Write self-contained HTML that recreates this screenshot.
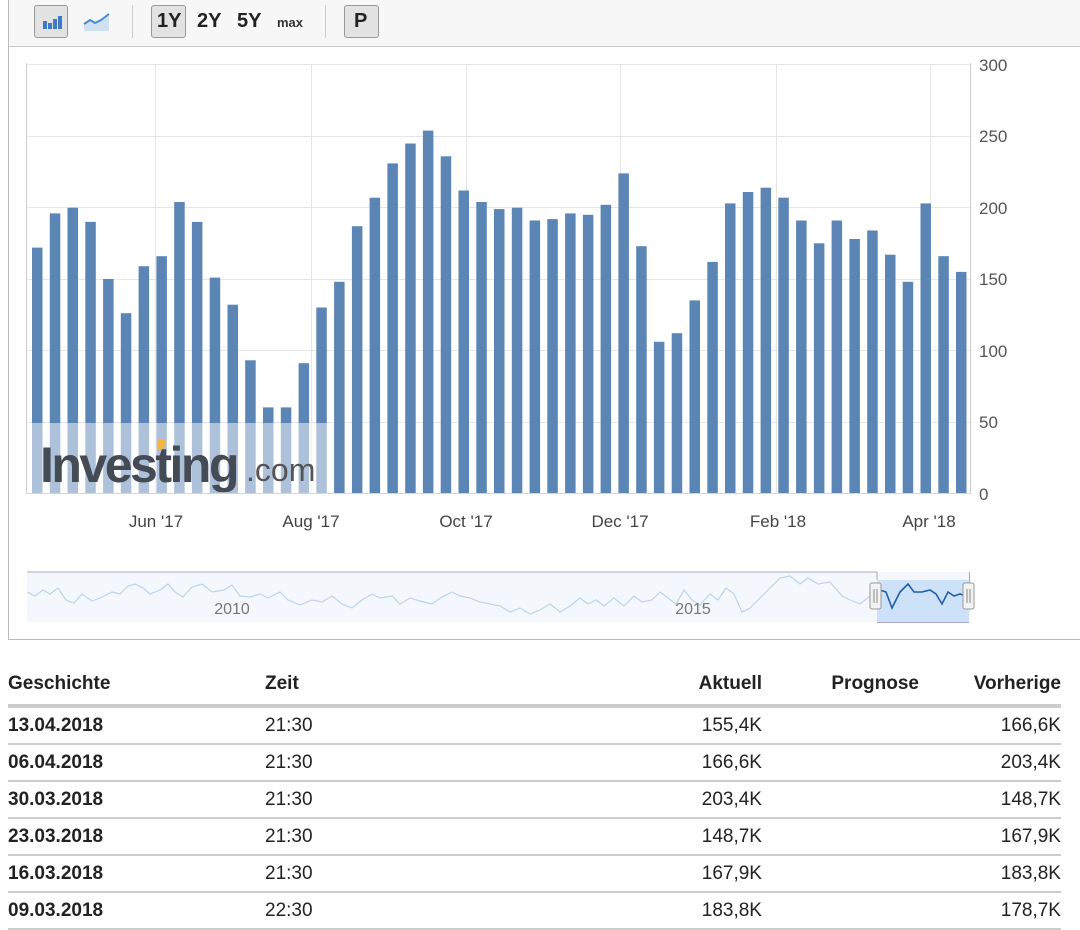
<!DOCTYPE html>
<html><head><meta charset="utf-8">
<style>
body{margin:0;width:1080px;height:927px;background:#fff;font-family:"Liberation Sans",sans-serif;overflow:hidden;position:relative}
.frame{position:absolute;left:8px;top:-2px;width:1080px;height:642px;border:1px solid #bbb;box-sizing:border-box}
.tb{position:absolute;left:9px;top:0;width:1071px;height:46px;background:#f7f7f7;border-bottom:1px solid #ccc}
.btn{position:absolute;top:5px;height:33px;border:1px solid #999;border-radius:3px;background:#e2e2e2;box-sizing:border-box}
.t{position:absolute;font-size:20px;color:#222;top:10px;font-weight:bold}
.sep{position:absolute;top:5px;width:1px;height:33px;background:#ccc}
table{position:absolute;left:8px;top:664px;width:1053px;border-collapse:collapse;font-size:19px;color:#222}
th{font-weight:bold;height:40px;text-align:left;border-bottom:4px solid #ccc;padding:0}
td{height:35px;border-bottom:2px solid #ccc;padding:0}
.r{text-align:right}
</style></head><body>
<div class="frame"></div>
<div class="tb">
 <div class="btn" style="left:25px;width:34px"></div>
 <svg style="position:absolute;left:32px;top:13px" width="22" height="18"><rect x="2" y="8" width="4" height="8" fill="#3d7cc4"/><rect x="7" y="10" width="4" height="6" fill="#3d7cc4"/><rect x="12" y="6" width="4" height="10" fill="#3d7cc4"/><rect x="17" y="3" width="4" height="13" fill="#3d7cc4"/></svg>
 <svg style="position:absolute;left:74px;top:12px" width="28" height="22"><path d="M1 19 L1 12 L7 8 L12 11 L18 8 L26 2 L26 19Z" fill="#cfe0f3"/><path d="M1 12 L7 8 L12 11 L18 8 L26 2" stroke="#4a8bd0" stroke-width="2" fill="none"/></svg>
 <div class="sep" style="left:123px"></div>
 <div class="btn" style="left:142px;width:35px"></div>
 <div class="t" style="left:148px">1Y</div>
 <div class="t" style="left:188px">2Y</div>
 <div class="t" style="left:228px">5Y</div>
 <div class="t" style="left:268px;font-size:13px;top:15px;color:#333">max</div>
 <div class="sep" style="left:316px"></div>
 <div class="btn" style="left:335px;width:35px"></div>
 <div class="t" style="left:345px">P</div>
</div>
<svg id="ch" style="position:absolute;left:0;top:0" width="1080" height="640">
 <g stroke="#e6e6e6" stroke-width="1">
  <line x1="27" y1="64.5" x2="970" y2="64.5"/><line x1="27" y1="136.5" x2="970" y2="136.5"/><line x1="27" y1="207.5" x2="970" y2="207.5"/><line x1="27" y1="279.5" x2="970" y2="279.5"/><line x1="27" y1="350.5" x2="970" y2="350.5"/><line x1="27" y1="422.5" x2="970" y2="422.5"/>
  <line x1="155.5" y1="64" x2="155.5" y2="493"/><line x1="311.5" y1="64" x2="311.5" y2="493"/><line x1="466.5" y1="64" x2="466.5" y2="493"/><line x1="620.5" y1="64" x2="620.5" y2="493"/><line x1="776.5" y1="64" x2="776.5" y2="493"/><line x1="930.5" y1="64" x2="930.5" y2="493"/>
 </g>
 <line x1="26.5" y1="63" x2="26.5" y2="494" stroke="#ccc"/>
 <line x1="970.5" y1="63" x2="970.5" y2="494" stroke="#ccc"/>
 <line x1="26" y1="493.5" x2="971" y2="493.5" stroke="#ccd6eb"/>
 <g id="bars" fill="#5b85b4"></g>
 <rect x="27" y="423" width="306" height="70" fill="#fff" opacity="0.5"/>
 <rect x="236" y="440" width="7" height="10" fill="#f5b63d" transform="skewX(-10)"/>
 <text x="40" y="482" font-size="50" font-weight="bold" fill="#454b55" letter-spacing="-2.5">Investing</text>
 <text x="246" y="481" font-size="32" fill="#555">.com</text>
 <g font-size="17" fill="#555">
  <text x="979" y="71">300</text><text x="979" y="142">250</text><text x="979" y="214">200</text><text x="979" y="285">150</text><text x="979" y="357">100</text><text x="979" y="428">50</text><text x="979" y="500">0</text>
 </g>
 <g font-size="17" fill="#444" text-anchor="middle">
  <text x="156" y="527">Jun '17</text><text x="311" y="527">Aug '17</text><text x="466" y="527">Oct '17</text><text x="620" y="527">Dec '17</text><text x="778" y="527">Feb '18</text><text x="929" y="527">Apr '18</text>
 </g>
 <rect x="27" y="572" width="943" height="50" fill="#f4f8fd"/>
 <path d="M27 572 H877 V580" stroke="#aaa" fill="none"/>
 <path d="M27 592 L35 596 L43 590 L50 594 L58 588 L66 600 L74 603 L82 594 L92 601 L100 598 L112 592 L120 594 L128 586 L135 584 L143 588 L150 594 L160 590 L168 584 L175 592 L183 597 L192 587 L202 584 L212 592 L224 590 L232 585 L240 596 L250 597 L260 594 L268 598 L280 592 L288 600 L300 605 L312 600 L322 602 L332 596 L342 604 L352 608 L362 600 L372 594 L380 598 L392 596 L400 604 L410 598 L420 601 L432 604 L442 597 L452 592 L460 596 L470 598 L480 602 L490 604 L500 606 L510 612 L520 608 L530 614 L540 610 L550 604 L560 612 L570 606 L580 598 L588 604 L596 600 L604 606 L614 598 L624 606 L634 596 L642 602 L652 600 L660 592 L668 598 L676 604 L684 590 L692 600 L700 605 L710 594 L718 600 L726 588 L734 594 L742 612 L750 608 L760 598 L770 588 L780 578 L790 576 L800 584 L808 578 L818 584 L830 582 L842 596 L850 600 L860 604 L870 596 L877 590" stroke="#bcd3ea" stroke-width="1.2" fill="none"/>
 <text x="232" y="614" font-size="16" fill="#777" text-anchor="middle">2010</text>
 <text x="693" y="614" font-size="16" fill="#777" text-anchor="middle">2015</text>
 <rect x="877" y="580" width="92" height="42" fill="#cde2f8"/>
 <line x1="877" y1="622.5" x2="969" y2="622.5" stroke="#aac"/>
 <path d="M880 590 L886 592 L892 608 L900 592 L908 584 L914 592 L922 592 L930 590 L936 594 L942 604 L948 592 L954 596 L960 594 L966 596" stroke="#1f5fa8" stroke-width="1.6" fill="none"/>
 <rect x="870" y="583" width="11" height="26" rx="2" fill="#f2f2f2" stroke="#999"/>
 <rect x="963" y="583" width="11" height="26" rx="2" fill="#f2f2f2" stroke="#999"/>
 <path d="M874 589v14M877 589v14M967 589v14M970 589v14" stroke="#888"/>
 <line x1="969.5" y1="572" x2="969.5" y2="583" stroke="#aaa"/>
</svg>
<table>
<tr><th style="width:257px">Geschichte</th><th style="width:300px">Zeit</th><th class="r" style="width:197px">Aktuell</th><th class="r" style="width:157px">Prognose</th><th class="r">Vorherige</th></tr>
<tr><td><b>13.04.2018</b></td><td>21:30</td><td class="r">155,4K</td><td></td><td class="r">166,6K</td></tr>
<tr><td><b>06.04.2018</b></td><td>21:30</td><td class="r">166,6K</td><td></td><td class="r">203,4K</td></tr>
<tr><td><b>30.03.2018</b></td><td>21:30</td><td class="r">203,4K</td><td></td><td class="r">148,7K</td></tr>
<tr><td><b>23.03.2018</b></td><td>21:30</td><td class="r">148,7K</td><td></td><td class="r">167,9K</td></tr>
<tr><td><b>16.03.2018</b></td><td>21:30</td><td class="r">167,9K</td><td></td><td class="r">183,8K</td></tr>
<tr><td><b>09.03.2018</b></td><td>22:30</td><td class="r">183,8K</td><td></td><td class="r">178,7K</td></tr>
</table>
<script>
var v=[172,196,200,190,150,126,159,166,204,190,151,132,93,60,60,91,130,148,187,207,231,245,254,236,212,204,199,200,191,192,196,195,202,224,173,106,112,135,162,203,211,214,207,191,175,191,178,184,167,148,203,166,155];
var g=document.getElementById('bars'),s='';
for(var i=0;i<v.length;i++){var h=v[i]*1.4267;s+='<rect x="'+(32+i*17.77).toFixed(1)+'" y="'+(493-h).toFixed(1)+'" width="10.5" height="'+h.toFixed(1)+'"/>';}
g.innerHTML=s;
</script>
</body></html>
